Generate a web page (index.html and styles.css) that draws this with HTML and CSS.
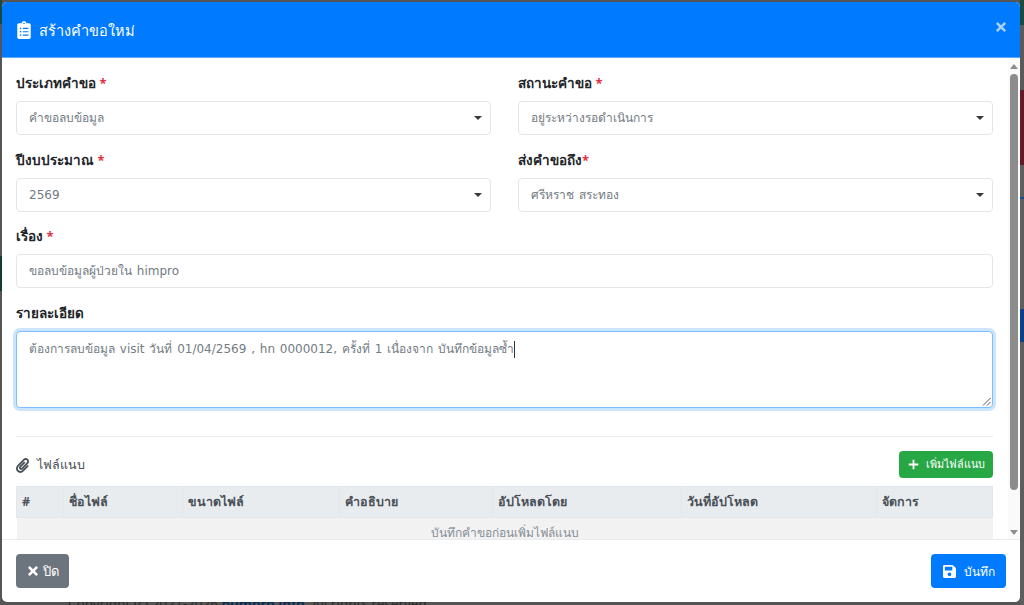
FILE: index.html
```html
<!DOCTYPE html>
<html lang="th">
<head>
<meta charset="utf-8">
<title>สร้างคำขอใหม่</title>
<link rel="stylesheet" href="styles.css">
</head>
<body>
<p class="page-footer">Copyright (c) 2021-2026 <b>bumbro info</b>. All rights reserved.</p>
<section class="modal">
  <header class="modal-header">
    <h1 class="modal-title">
      <svg class="icon-title" viewBox="0 0 384 512"><path d="M336 64h-80c0-35.3-28.7-64-64-64s-64 28.7-64 64H48C21.5 64 0 85.5 0 112v352c0 26.5 21.5 48 48 48h288c26.5 0 48-21.5 48-48V112c0-26.5-21.5-48-48-48zM96 424c-13.3 0-24-10.7-24-24s10.7-24 24-24 24 10.7 24 24-10.7 24-24 24zm0-96c-13.3 0-24-10.7-24-24s10.7-24 24-24 24 10.7 24 24-10.7 24-24 24zm0-96c-13.3 0-24-10.7-24-24s10.7-24 24-24 24 10.7 24 24-10.7 24-24 24zm96-192c13.3 0 24 10.7 24 24s-10.7 24-24 24-24-10.7-24-24 10.7-24 24-24zm128 368c0 4.4-3.6 8-8 8H168c-4.4 0-8-3.6-8-8v-16c0-4.4 3.6-8 8-8h144c4.4 0 8 3.6 8 8v16zm0-96c0 4.4-3.6 8-8 8H168c-4.4 0-8-3.6-8-8v-16c0-4.4 3.6-8 8-8h144c4.4 0 8 3.6 8 8v16zm0-96c0 4.4-3.6 8-8 8H168c-4.4 0-8-3.6-8-8v-16c0-4.4 3.6-8 8-8h144c4.4 0 8 3.6 8 8v16z"/></svg>
      <span>สร้างคำขอใหม่</span>
    </h1>
    <svg class="icon-close" viewBox="0 0 352 512"><path d="M242.72 256l100.07-100.07c12.28-12.28 12.28-32.19 0-44.48l-22.24-22.24c-12.28-12.28-32.19-12.28-44.48 0L176 189.28 75.93 89.21c-12.28-12.28-32.19-12.28-44.48 0L9.21 111.45c-12.28 12.28-12.28 32.19 0 44.48L109.28 256 9.21 356.07c-12.28 12.28-12.28 32.19 0 44.48l22.24 22.24c12.28 12.28 32.2 12.28 44.48 0L176 322.72l100.07 100.07c12.28 12.28 32.2 12.28 44.48 0l22.24-22.24c12.28-12.28 12.28-32.19 0-44.48L242.72 256z"/></svg>
  </header>

  <div class="modal-main">
    <div class="modal-body">
      <div class="form-grid">
        <div class="field">
          <div class="label">ประเภทคำขอ <span class="req">*</span></div>
          <div class="control select">คำขอลบข้อมูล</div>
        </div>
        <div class="field">
          <div class="label">สถานะคำขอ <span class="req">*</span></div>
          <div class="control select">อยู่ระหว่างรอดำเนินการ</div>
        </div>
        <div class="field">
          <div class="label">ปีงบประมาณ <span class="req">*</span></div>
          <div class="control select">2569</div>
        </div>
        <div class="field">
          <div class="label">ส่งคำขอถึง<span class="req">*</span></div>
          <div class="control select">ศรีหราช สระทอง</div>
        </div>
        <div class="field wide">
          <div class="label">เรื่อง <span class="req">*</span></div>
          <div class="control">ขอลบข้อมูลผู้ป่วยใน himpro</div>
        </div>
        <div class="field wide tall">
          <div class="label">รายละเอียด</div>
          <div class="control textarea">ต้องการลบข้อมูล visit วันที่ 01/04/2569 , hn 0000012, ครั้งที่ 1 เนื่องจาก บันทึกข้อมูลซ้ำ<span class="text-caret"></span>
            <svg class="resize-grip" viewBox="0 0 9 9"><path d="M8.5 1 1 8.5M8.5 5 5 8.5"/></svg>
          </div>
        </div>
      </div>

      <hr class="divider">

      <div class="attach-bar">
        <div class="attach-title">
          <svg class="icon-clip" viewBox="0 0 448 512"><path d="M43.246 466.142c-58.43-60.289-57.341-157.511 1.386-217.581L254.392 34c44.316-45.332 116.351-45.336 160.671 0 43.89 44.894 43.943 117.329 0 162.276L232.214 383.128c-29.855 30.537-78.633 30.111-107.982-.998-28.275-29.97-27.368-77.473 1.452-106.953l143.743-146.835c6.182-6.314 16.312-6.422 22.626-.241l22.861 22.379c6.315 6.182 6.422 16.312.241 22.626L171.427 319.927c-4.932 5.045-5.236 13.428-.648 18.292 4.372 4.634 11.245 4.711 15.688.165l182.849-186.851c19.613-20.062 19.613-52.725-.011-72.798-19.189-19.627-49.957-19.637-69.154 0L90.39 293.295c-34.763 35.56-35.299 93.12-1.191 128.313 34.01 35.093 88.985 35.137 123.058.286l172.06-175.999c6.177-6.319 16.307-6.433 22.626-.256l22.877 22.364c6.319 6.177 6.434 16.307.256 22.626l-172.06 175.998c-59.576 60.938-155.943 60.216-214.77-.485z"/></svg>
          <span>ไฟล์แนบ</span>
        </div>
        <button class="btn btn-green">
          <svg class="icon-plus" viewBox="0 0 12 12"><path d="M6 .8v10.4M.8 6h10.4"/></svg>
          <span>เพิ่มไฟล์แนบ</span>
        </button>
      </div>

      <table class="files">
        <colgroup><col class="c1"><col class="c2"><col class="c3"><col class="c4"><col class="c5"><col class="c6"><col class="c7"></colgroup>
        <thead>
          <tr><th>#</th><th>ชื่อไฟล์</th><th>ขนาดไฟล์</th><th>คำอธิบาย</th><th>อัปโหลดโดย</th><th>วันที่อัปโหลด</th><th>จัดการ</th></tr>
        </thead>
        <tbody>
          <tr><td colspan="7">บันทึกคำขอก่อนเพิ่มไฟล์แนบ</td></tr>
        </tbody>
      </table>
    </div>

    <div class="scrollbar">
      <span class="arrow-up"></span>
      <span class="thumb"></span>
      <span class="arrow-down"></span>
    </div>
  </div>

  <footer class="modal-footer">
    <button class="btn btn-gray">
      <svg class="icon-x" viewBox="0 0 352 512"><path d="M242.72 256l100.07-100.07c12.28-12.28 12.28-32.19 0-44.48l-22.24-22.24c-12.28-12.28-32.19-12.28-44.48 0L176 189.28 75.93 89.21c-12.28-12.28-32.19-12.28-44.48 0L9.21 111.45c-12.28 12.28-12.28 32.19 0 44.48L109.28 256 9.21 356.07c-12.28 12.28-12.28 32.19 0 44.48l22.24 22.24c12.28 12.28 32.2 12.28 44.48 0L176 322.72l100.07 100.07c12.28 12.28 32.2 12.28 44.48 0l22.24-22.24c12.28-12.28 12.28-32.19 0-44.48L242.72 256z"/></svg>
      <span>ปิด</span>
    </button>
    <button class="btn btn-blue">
      <svg class="icon-save" viewBox="0 0 448 512"><path d="M433.941 129.941l-83.882-83.882A48 48 0 0 0 316.118 32H48C21.49 32 0 53.49 0 80v352c0 26.51 21.49 48 48 48h352c26.51 0 48-21.49 48-48V163.882a48 48 0 0 0-14.059-33.941zM224 416c-35.346 0-64-28.654-64-64 0-35.346 28.654-64 64-64s64 28.654 64 64c0 35.346-28.654 64-64 64zm96-304.52V212c0 6.627-5.373 12-12 12H76c-6.627 0-12-5.373-12-12V108c0-6.627 5.373-12 12-12h228.52c3.183 0 6.235 1.264 8.485 3.515l3.48 3.48A11.996 11.996 0 0 1 320 111.48z"/></svg>
      <span>บันทึก</span>
    </button>
  </footer>
</section>
</body>
</html>
```
FILE: styles.css
```css
* { box-sizing: border-box; }
html, body { height: 100%; }
body {
  margin: 0;
  height: 605px;
  overflow: hidden;
  position: relative;
  padding: 2px 4px 3px 2px;
  font-family: "Noto Sans", "Open Sans", sans-serif;
  font-size: 14px;
  color: #6c757d;
  background-color: #555;
  background-image:
    linear-gradient(#1c4a40 0 25px, #5a5a5a 25px 90px, #641a26 90px 165px, #5e5e5e 165px 197px, #0f4f96 197px 199px, #5e5e5e 199px 309px, #0c418a 309px 342px, #5e5e5e 342px),
    linear-gradient(#1c4a40 0 24px, #555 24px 256px, #123c33 256px 291px, #555 291px);
  background-position: right top, left top;
  background-size: 4px 605px, 2px 605px;
  background-repeat: no-repeat;
}
.page-footer {
  position: absolute;
  left: 68px;
  top: 595px;
  margin: 0;
  font-size: 13.5px;
  color: #2c2c2c;
}
.page-footer b { color: #0a2a55; }
.modal {
  position: relative;
  height: 600px;
  display: flex;
  flex-direction: column;
  background: #fff;
  border-radius: 5px;
  overflow: hidden;
}
.modal-header {
  flex: 0 0 56px;
  background: #007bff;
  border-bottom: 1px solid #5aa8ff;
  display: flex;
  align-items: center;
  justify-content: space-between;
  padding: 0 14px 0 15px;
  color: #fff;
}
.modal-title {
  margin: 0;
  display: flex;
  align-items: center;
  gap: 8px;
  font-size: 14.5px;
  font-weight: 400;
  line-height: 24px;
}
.icon-title { width: 14px; height: 18px; fill: #fff; flex-shrink: 0; }
.icon-close { width: 10px; height: 14px; fill: #fff; opacity: .65; margin-top: -6px; }
.modal-main { flex: 1; min-height: 0; display: flex; }
.modal-body {
  flex: 1;
  min-width: 0;
  overflow: hidden;
  padding: 15px 15px 0 14px;
}
.form-grid {
  display: grid;
  grid-template-columns: 1fr 1fr;
  column-gap: 27px;
}
.field { height: 76.5px; }
.wide { grid-column: 1 / -1; }
.tall { height: auto; }
.label {
  height: 21px;
  margin-bottom: 7px;
  line-height: 21px;
  font-size: 13.5px;
  font-weight: 700;
  color: #212529;
}
.req { color: #dc3545; font-size: 13px; }
.control {
  position: relative;
  height: 34px;
  padding: 0 12px;
  border: 1px solid #e3e6e9;
  border-radius: 4px;
  line-height: 32px;
  font-family: "DejaVu Sans", "Noto Sans", sans-serif;
  font-size: 12px;
  word-spacing: 1px;
  color: #737b83;
  background: #fff;
}
.select::after {
  content: "";
  position: absolute;
  right: 8px;
  top: 14px;
  border: 4px solid transparent;
  border-top: 4px solid #343a40;
  border-bottom: 0;
}
.textarea {
  height: 77px;
  padding-top: 1px;
  border-color: #80bdff;
  box-shadow: 0 0 0 3px rgba(0, 123, 255, .2);
}
.text-caret {
  display: inline-block;
  width: 1px;
  height: 17px;
  background: #333;
  vertical-align: middle;
}
.resize-grip {
  position: absolute;
  right: 1px;
  bottom: 1px;
  width: 9px;
  height: 9px;
  fill: none;
  stroke: #555;
  stroke-width: 1;
}
.divider {
  margin: 28px 0 14px;
  border: 0;
  border-top: 1px solid #e9ecef;
}
.attach-bar {
  display: flex;
  align-items: center;
  justify-content: space-between;
  margin-bottom: 8px;
}
.attach-title { display: flex; align-items: center; gap: 8px; padding-top: 2px; font-size: 12.5px; color: #495057; }
.icon-clip { width: 13px; height: 15px; fill: #495057; }
.btn {
  display: inline-flex;
  align-items: center;
  border: 0;
  border-radius: 4px;
  color: #fff;
  font-family: inherit;
}
.btn svg { flex-shrink: 0; }
.btn-green { width: 94px; height: 27px; padding: 0 0 0 9px; gap: 7px; background: #28a745; font-size: 10.8px; white-space: nowrap; }
.icon-plus { width: 11px; height: 11px; fill: none; stroke: #fff; stroke-width: 2; }
.files { width: 100%; table-layout: fixed; border-collapse: collapse; font-size: 12.5px; }
.c1 { width: 47px; } .c2 { width: 119px; } .c3 { width: 157px; } .c4 { width: 153px; }
.c5 { width: 189px; } .c6 { width: 195px; }
.files th {
  height: 31px;
  padding: 0 5px;
  text-align: left;
  font-weight: 700;
  color: #495057;
  background: #e9ecef;
  border: 1px solid #e3e7ea;
}
.files td {
  height: 31px;
  text-align: center;
  color: #868e96;
  background: #f2f2f2;
  font-size: 12px;
}
.scrollbar {
  flex: 0 0 12px;
  background: #fafafa;
  display: flex;
  flex-direction: column;
  align-items: center;
  padding: 6px 0 4px;
}
.arrow-up { border: 4px solid transparent; border-bottom: 5px solid #8c8c8c; border-top: 0; }
.arrow-down { border: 4px solid transparent; border-top: 5px solid #8c8c8c; border-bottom: 0; margin-top: auto; }
.thumb { width: 8px; height: 416px; margin-top: 5px; border-radius: 4px; background: #8c8c8c; }
.modal-footer {
  flex: 0 0 63px;
  display: flex;
  align-items: center;
  justify-content: space-between;
  padding: 0 14px;
  border-top: 1px solid #e9ecef;
}
.btn-gray { height: 34px; width: 53px; padding: 0 0 0 12px; gap: 5px; background: #6c757d; font-size: 13px; }
.btn-blue { height: 34px; width: 75px; padding: 0 0 0 12px; gap: 8px; background: #007bff; font-size: 12px; }
.icon-x { width: 10px; height: 14px; fill: #fff; }
.icon-save { width: 13px; height: 15px; fill: #fff; }
```
